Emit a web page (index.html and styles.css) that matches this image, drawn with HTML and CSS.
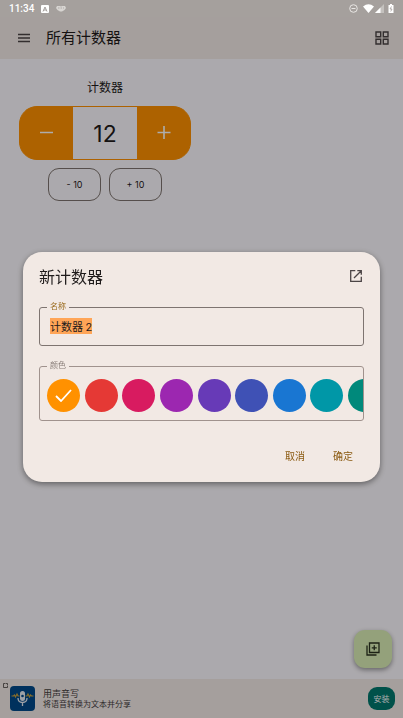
FILE: index.html
```html
<!DOCTYPE html>
<html lang="zh-CN">
<head>
    <meta charset="UTF-8">
    <meta name="viewport" content="width=device-width, initial-scale=1.0">
    <title>所有计数器</title>
    <link rel="stylesheet" href="styles.css">
</head>
<body>
    <div class="statusbar">
        <span class="clock">11:34</span>
        <svg class="status-app" width="8" height="8" viewBox="0 0 8 8"><rect width="8" height="8" rx="1" fill="#fff"/><path d="M2 6.5L4 2l2 4.500M2.800 5h2.400" fill="none" stroke="#a5a09d"/></svg>
        <svg class="status-app" width="10" height="8" viewBox="0 0 10 8"><path d="M1 1h3l1 .5L6 1h3l1 2-1.500 2L6 6.500H4L1.500 5 0 3z" fill="#d8d5d2"/><path d="M2 3h6" stroke="#a5a09d" stroke-width=".8" stroke-dasharray="1.500 1"/></svg>
        <span class="spacer"></span>
        <svg width="9" height="9" viewBox="0 0 9 9" fill="none" stroke="#e8e6e4"><circle cx="4.500" cy="4.500" r="3.800"/><path d="M2.500 4.500h4"/></svg>
        <svg class="status-wifi" width="11" height="9" viewBox="0 0 11 9"><path d="M0 2.500Q5.500-2 11 2.500L5.500 9z" fill="#fff"/></svg>
        <svg class="status-signal" width="9" height="9" viewBox="0 0 9 9"><path d="M9 0v9H0z" fill="#c4c1be"/><path d="M5.500 3.500V9H0z" fill="#fff"/></svg>
        <svg class="status-battery" width="6" height="9" viewBox="0 0 6 9"><path d="M2 0h2v1h1.500v8h-5V1H2z" fill="#fff"/><path d="M3.500 2.500L2 5h2L2.700 7.500" fill="none" stroke="#a5a09d" stroke-width=".8"/></svg>
    </div>

    <header class="appbar">
        <button class="icon-button" aria-label="菜单">
            <svg width="12" height="10" viewBox="0 0 12 10" stroke="#4c4546" stroke-width="1.500"><path d="M0 1.500h12M0 5h12M0 8.500h12"/></svg>
        </button>
        <h1>所有计数器</h1>
        <button class="icon-button" aria-label="网格视图">
            <svg width="14" height="14" viewBox="0 0 14 14" fill="none" stroke="#4c4546" stroke-width="1.400"><path d="M1 1h4.700v4.700H1zM8.300 1H13v4.700H8.300zM1 8.300h4.700V13H1zM8.300 8.300H13V13H8.300z"/></svg>
        </button>
    </header>

    <main>
        <section class="counter">
            <h2>计数器</h2>
            <div class="stepper">
                <button id="minus" aria-label="减少">
                    <svg width="14" height="14" viewBox="0 0 14 14" stroke="#fff" stroke-width="1.600"><path d="M0 6.500h13"/></svg>
                </button>
                <output id="value">12</output>
                <button id="plus" aria-label="增加">
                    <svg width="14" height="14" viewBox="0 0 14 14" stroke="#fff" stroke-width="1.600"><path d="M.5 6.500h13M7 0v13"/></svg>
                </button>
            </div>
            <div class="quick">
                <button>- 10</button>
                <button>+ 10</button>
            </div>
        </section>
        <button class="fab" aria-label="添加计数器">
            <svg width="14" height="14" viewBox="0 0 14 14" fill="none" stroke="#2c3320" stroke-width="1.300"><path d="M3.500 1h9.500v9.500H3.500zM1 3.500V13h9.500M8.250 3.300v5M5.750 5.800h5"/></svg>
        </button>
    </main>

    <footer class="ad">
        <svg class="ad-mark" width="5" height="5" viewBox="0 0 5 5" fill="none" stroke="#45403f" stroke-width=".8"><path d="M4.500 2.500v2h-4v-4h2M3 .5h1.500V2"/></svg>
        <svg class="ad-logo" width="25" height="25" viewBox="0 0 25 25">
            <rect width="25" height="25" rx="4" fill="#00498a"/>
            <path d="M1.500 10h2l1-1 1 2 1.500-3 1 2h1.500M15.500 10H17l1-2 1.500 3 1-2 1 1h2" fill="none" stroke="#c9a13c" stroke-width="1.200"/>
            <rect x="10" y="5" width="5" height="10" rx="2.500" fill="#e8eef5"/>
            <circle cx="12.500" cy="10" r="1.300" fill="#00498a"/>
            <path d="M8 12c0 6 9 6 9 0M12.500 16.500V20" fill="none" stroke="#e8eef5" stroke-width="1.300"/>
        </svg>
        <div class="ad-text">
            <strong>用声音写</strong>
            <span>将语音转换为文本并分享</span>
        </div>
        <button class="install">安装</button>
    </footer>

    <div class="scrim">
        <form class="dialog" role="dialog" aria-labelledby="dialogTitle">
            <div class="dialog-head">
                <h2 id="dialogTitle">新计数器</h2>
                <button type="button" class="icon-button" aria-label="全屏打开">
                    <svg width="12" height="12" viewBox="0 0 12 12" fill="none" stroke="#4c4546" stroke-width="1.300"><path d="M5.300.7H.7v10.600h10.600V6.700M7.300.7h4v4M11.300.7L4 8"/></svg>
                </button>
            </div>

            <fieldset class="field name-field">
                <legend><label for="name">名称</label></legend>
                <input id="name" type="text" value="计数器 2" autocomplete="off" spellcheck="false">
            </fieldset>

            <fieldset class="field color-field">
                <legend>颜色</legend>
                <div class="swatches">
                    <input type="radio" name="color" class="orange" aria-label="橙色" checked>
                    <input type="radio" name="color" class="red" aria-label="红色">
                    <input type="radio" name="color" class="pink" aria-label="粉色">
                    <input type="radio" name="color" class="purple" aria-label="紫色">
                    <input type="radio" name="color" class="violet" aria-label="深紫色">
                    <input type="radio" name="color" class="indigo" aria-label="靛蓝色">
                    <input type="radio" name="color" class="blue" aria-label="蓝色">
                    <input type="radio" name="color" class="cyan" aria-label="青色">
                    <input type="radio" name="color" class="teal" aria-label="蓝绿色">
                </div>
                <svg class="check" width="17" height="13" viewBox="0 0 17 13" fill="none" stroke="#fff" stroke-width="1.800"><path d="M1 7l5 5L16 1"/></svg>
            </fieldset>

            <div class="actions">
                <button type="button">取消</button>
                <button type="button">确定</button>
            </div>
        </form>
    </div>

    <script src="script.js"></script>
</body>
</html>
```

FILE: styles.css
```css
* {
    box-sizing: border-box;
}

body {
    margin: 0;
    min-height: 100vh;
    display: flex;
    flex-direction: column;
    font-family: Roboto, "Noto Sans CJK SC", sans-serif;
    color: #1f1b1b;
    background-color: #fdfaff;
}

h1, h2 {
    margin: 0;
    font-weight: 400;
}

button {
    padding: 0;
    border: none;
    background: none;
    font-family: inherit;
    color: inherit;
    cursor: pointer;
    display: flex;
    align-items: center;
    justify-content: center;
}

svg {
    display: block;
    flex: none;
}

/* System bar, stays bright above the scrim */
.statusbar {
    position: relative;
    z-index: 2;
    display: flex;
    align-items: center;
    height: 17px;
    padding: 0 9px;
    background-color: #a5a09d;
    color: #fff;
}

.clock {
    font-size: 10px;
    font-weight: 500;
}

.status-app {
    margin-left: 7px;
}

.spacer {
    flex: 1;
}

.status-wifi {
    margin-left: 5px;
}

.status-signal {
    margin-left: 1px;
}

.status-battery {
    margin-left: 4px;
}

.appbar {
    display: flex;
    align-items: center;
    height: 42px;
    padding: 0 9px 0 12px;
    background-color: #f3ebe7;
}

.appbar h1 {
    flex: 1;
    margin-left: 10px;
    font-size: 15px;
    line-height: 22px;
}

.icon-button {
    width: 24px;
    height: 24px;
}

main {
    flex: 1;
    display: flex;
    flex-direction: column;
    justify-content: space-between;
    padding: 20px 11px 11px 19px;
}

.counter {
    width: 172px;
}

.counter h2 {
    font-size: 12px;
    line-height: 18px;
    text-align: center;
}

.stepper {
    display: grid;
    grid-template-columns: 53px 1fr 53px;
    height: 54px;
    margin-top: 9px;
    border: 1px solid #ff9100;
    border-radius: 18px;
    overflow: hidden;
    background-color: #ff9100;
}

.stepper output {
    display: flex;
    align-items: center;
    justify-content: center;
    padding-top: 2px;
    font-family: Inter, sans-serif;
    font-size: 23px;
    background-color: #fdfaff;
}

.quick {
    display: flex;
    justify-content: center;
    gap: 8px;
    margin-top: 8px;
}

.quick button {
    width: 53px;
    height: 33px;
    border: 1px solid #7e7470;
    border-radius: 11px;
    font-family: Inter, sans-serif;
    font-size: 9px;
}

.fab {
    align-self: flex-end;
    width: 38px;
    height: 38px;
    border-radius: 11px;
    background-color: #daeeb6;
    box-shadow: 0 2px 5px rgba(0, 0, 0, 0.4);
}

.ad {
    position: relative;
    display: flex;
    align-items: center;
    height: 39px;
    padding: 0 8px 0 10px;
    background-color: #f3ebe7;
}

.ad-mark {
    position: absolute;
    top: 4px;
    left: 3px;
}

.ad-text {
    flex: 1;
    display: flex;
    flex-direction: column;
    margin-left: 8px;
    color: #45403f;
}

.ad-text strong {
    font-size: 9px;
    font-weight: 400;
    line-height: 12px;
}

.ad-text span {
    font-size: 8px;
    line-height: 10px;
}

.install {
    width: 27px;
    height: 23px;
    border-radius: 9px;
    background-color: #00786e;
    color: #fff;
    font-size: 8px;
}

.scrim {
    position: fixed;
    inset: 0;
    z-index: 1;
    display: flex;
    align-items: center;
    padding: 16px 23px 0;
    background-color: rgba(0, 0, 0, 0.32);
}

.dialog {
    width: 100%;
    padding: 12px 16px 14px;
    border-radius: 19px;
    background-color: #f2e9e4;
    box-shadow: 0 2px 6px rgba(0, 0, 0, 0.45);
}

.dialog-head {
    display: flex;
    align-items: flex-start;
    justify-content: space-between;
    margin-right: -4px;
}

.dialog-head h2 {
    font-size: 16px;
    line-height: 28px;
}

.field {
    position: relative;
    min-width: 0;
    margin: 0;
    padding: 0;
    border: 1px solid #7e7470;
    border-radius: 3px;
}

.field legend {
    margin-left: 7px;
    padding: 0 3px;
    font-size: 8px;
    line-height: 12px;
    color: #8a7f7a;
}

.name-field {
    margin-top: 9px;
}

.name-field legend {
    color: #9a6a1c;
}

.name-field input {
    display: block;
    width: 100%;
    height: 32px;
    padding: 0 10px 6px;
    border: none;
    outline: none;
    background: none;
    font-family: inherit;
    font-size: 11px;
    color: #1f1b1b;
}

.name-field input::selection {
    background-color: #ffa557;
    color: #1f1b1b;
}

.color-field {
    height: 61px;
    margin-top: 14px;
    border-color: #a0928d;
    overflow: hidden;
}

.swatches {
    display: flex;
    justify-content: space-between;
    width: 334px;
    margin: 7px 0 0 7px;
}

.swatches input {
    appearance: none;
    width: 33px;
    height: 33px;
    margin: 0;
    border-radius: 50%;
}

.orange { background-color: #ff9100; }
.red { background-color: #e53935; }
.pink { background-color: #d81b60; }
.purple { background-color: #9c27b0; }
.violet { background-color: #673ab7; }
.indigo { background-color: #3f51b5; }
.blue { background-color: #1976d2; }
.cyan { background-color: #0097a7; }
.teal { background-color: #00897b; }

/* Tick on the selected swatch */
.check {
    position: absolute;
    top: 17px;
    left: 15px;
    pointer-events: none;
}

.actions {
    display: flex;
    justify-content: flex-end;
    gap: 8px;
    margin: 21px 1px 0 0;
}

.actions button {
    width: 40px;
    height: 26px;
    border-radius: 13px;
    font-size: 10px;
    color: #8b5a10;
}
```

FILE: script.js
```javascript
const value = document.getElementById('value');
const nameInput = document.getElementById('name');

document.getElementById('minus').addEventListener('click', () => {
    value.textContent = Number(value.textContent) - 1;
});

document.getElementById('plus').addEventListener('click', () => {
    value.textContent = Number(value.textContent) + 1;
});

// The suggested name is selected so typing replaces it
nameInput.focus();
nameInput.select();
```
